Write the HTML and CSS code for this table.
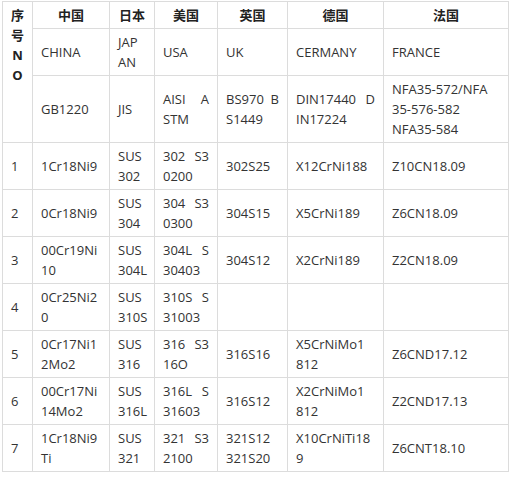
FILE: index.html
```html
<!DOCTYPE html>
<html lang="zh">
<head>
<meta charset="utf-8">
<title>不锈钢牌号对照表</title>
<link rel="stylesheet" href="styles.css">
</head>
<body>
<table class="grade-table">
  <colgroup>
    <col class="c0"><col class="c1"><col class="c2"><col class="c3"><col class="c4"><col class="c5"><col class="c6">
  </colgroup>
  <tbody>
    <tr class="head-row">
      <th class="no-head" rowspan="3">序<br>号<br>N<br>O</th>
      <th>中国</th><th>日本</th><th>美国</th><th>英国</th><th>德国</th><th>法国</th>
    </tr>
    <tr><td>CHINA</td><td>JAP<br>AN</td><td>USA</td><td>UK</td><td>CERMANY</td><td>FRANCE</td></tr>
    <tr><td>GB1220</td><td>JIS</td><td>AISI A<br>STM</td><td>BS970 B<br>S1449</td><td>DIN17440 D<br>IN17224</td><td>NFA35-572/NFA<br>35-576-582<br>NFA35-584</td></tr>
    <tr><td>1</td><td>1Cr18Ni9</td><td>SUS<br>302</td><td>302 S3<br>0200</td><td>302S25</td><td>X12CrNi188</td><td>Z10CN18.09</td></tr>
    <tr><td>2</td><td>0Cr18Ni9</td><td>SUS<br>304</td><td>304 S3<br>0300</td><td>304S15</td><td>X5CrNi189</td><td>Z6CN18.09</td></tr>
    <tr><td>3</td><td>00Cr19Ni<br>10</td><td>SUS<br>304L</td><td>304L S<br>30403</td><td>304S12</td><td>X2CrNi189</td><td>Z2CN18.09</td></tr>
    <tr><td>4</td><td>0Cr25Ni2<br>0</td><td>SUS<br>310S</td><td>310S S<br>31003</td><td></td><td></td><td></td></tr>
    <tr><td>5</td><td>0Cr17Ni1<br>2Mo2</td><td>SUS<br>316</td><td>316 S3<br>16O</td><td>316S16</td><td>X5CrNiMo1<br>812</td><td>Z6CND17.12</td></tr>
    <tr><td>6</td><td>00Cr17Ni<br>14Mo2</td><td>SUS<br>316L</td><td>316L S<br>31603</td><td>316S12</td><td>X2CrNiMo1<br>812</td><td>Z2CND17.13</td></tr>
    <tr><td>7</td><td>1Cr18Ni9<br>Ti</td><td>SUS<br>321</td><td>321 S3<br>2100</td><td>321S12<br>321S20</td><td>X10CrNiTi18<br>9</td><td>Z6CNT18.10</td></tr>
  </tbody>
</table>
</body>
</html>
```

FILE: styles.css
```css
html, body {
  margin: 0;
  padding: 0;
  background: #fff;
}
body {
  padding: 1px 0 0 2px;
  font-family: "Open Sans", "Noto Sans CJK SC", sans-serif;
  font-size: 13px;
  line-height: 20px;
  color: #333;
}
.grade-table {
  border-collapse: collapse;
  table-layout: fixed;
  width: 507px;
}
.c0 { width: 30px; }
.c1 { width: 77px; }
.c2 { width: 45px; }
.c3 { width: 63px; }
.c4 { width: 70px; }
.c5 { width: 96px; }
.c6 { width: 125px; }
.grade-table th,
.grade-table td {
  border: 1px solid #dcdcdc;
  padding: 3px 8px;
  vertical-align: middle;
}
.grade-table th {
  font-weight: bold;
  text-align: center;
  color: #222;
}
.grade-table .no-head {
  vertical-align: top;
  padding: 3px 0;
}
.grade-table td {
  text-align: justify;
  text-align-last: justify;
}
```
